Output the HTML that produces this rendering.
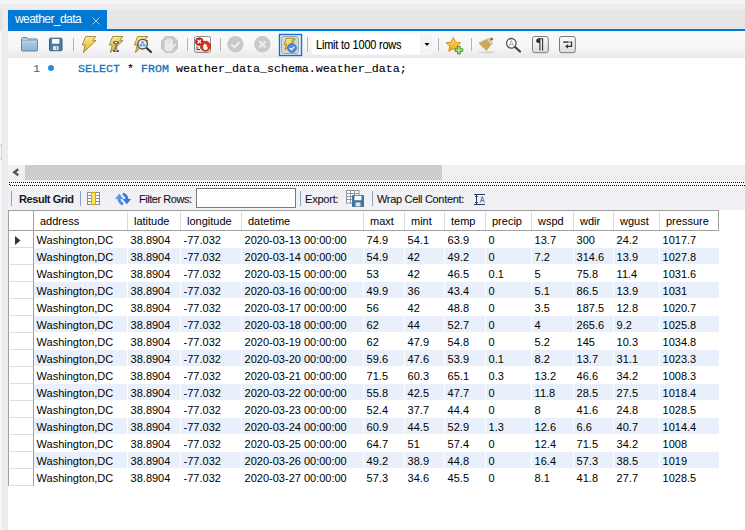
<!DOCTYPE html>
<html><head><meta charset="utf-8">
<style>
*{margin:0;padding:0;box-sizing:border-box}
html,body{width:745px;height:530px;overflow:hidden;background:#fff;font-family:"Liberation Sans",sans-serif;font-size:11px;color:#000}
.a{position:absolute}
#top{left:0;top:0;width:745px;height:4px;background:#f4f4f6}
#top2{left:0;top:4px;width:745px;height:6px;background:#ececef}
#ls1{left:0;top:10px;width:2px;height:21px;background:#e3e3e3}
#ls2{left:2px;top:10px;width:6px;height:520px;background:#ececef}
#ls3{left:0;top:31px;width:2px;height:499px;background:#f6f6f6}
#strip{left:8px;top:10px;width:737px;height:19px;background:#e6e6e6}
#tab{left:8px;top:10px;width:99px;height:21px;background:#0078d4;color:#fff;font-size:12px}
#bline{left:8px;top:29px;width:737px;height:2px;background:#0078d4}
#tb{left:8px;top:31px;width:737px;height:27px;background:linear-gradient(#f9f9f9 0,#f7f7f7 55%,#e9e9e9 100%)}
#ed{left:8px;top:58px;width:737px;height:107px;background:#fff}
#sb{left:8px;top:165px;width:737px;height:16px;background:#f0f0f0}
#thumb{left:25px;top:165px;width:417px;height:15px;background:#cdcdcd}
#dots{left:8px;top:181px;width:737px;height:6px;background:#fff}
#rtb{left:8px;top:186px;width:737px;height:24px;background:#f0f0f5}
.sep{position:absolute;width:1px;background:#a8a8a8}
.sep2{position:absolute;width:1px;background:#8aa2bc}
.mono{font-family:"Liberation Mono",monospace;font-size:11.67px}
.gt{white-space:pre;font-size:11px;line-height:17px}
</style></head><body>
<div class="a" id="top"></div>
<div class="a" id="top2"></div>
<div class="a" id="ls1"></div>
<div class="a" id="ls2"></div>
<div class="a" id="ls3"></div>
<div class="a" style="left:0;top:144px;width:2px;height:16px;border:1px solid #d2d2d2;border-left:none"></div>
<div class="a" id="strip"></div>
<div class="a" id="bline"></div>
<div class="a" id="tab"><span class="a" style="left:7px;top:2px;letter-spacing:-0.55px">weather_data</span>
<svg class="a" style="left:84px;top:7px" width="8" height="8"><path d="M0.5 0.5L7.5 7.5M7.5 0.5L0.5 7.5" stroke="#a9cdf0" stroke-width="1"/></svg></div>
<div class="a" id="tb"></div>
<!--TB-->
<svg class="a" style="left:0;top:31px" width="745" height="27">
<defs>
<linearGradient id="fold" x1="0" y1="0" x2="0" y2="1"><stop offset="0" stop-color="#c2d7ea"/><stop offset="1" stop-color="#8eb0cd"/></linearGradient>
<linearGradient id="bolt" x1="0" y1="0" x2="0.3" y2="1"><stop offset="0" stop-color="#fdf6c8"/><stop offset="0.35" stop-color="#f2dc70"/><stop offset="1" stop-color="#dcb432"/></linearGradient>
<linearGradient id="btn" x1="0" y1="0" x2="0" y2="1"><stop offset="0" stop-color="#fdfdfd"/><stop offset="1" stop-color="#dcdcdc"/></linearGradient>
<linearGradient id="star" x1="0" y1="0" x2="0" y2="1"><stop offset="0" stop-color="#ffe070"/><stop offset="1" stop-color="#f0a010"/></linearGradient>
</defs>
<!-- folder -->
<path d="M21.5 7.5q0-1 1-1h4.5l1.2 1.5h8.3q1 0 1 1v10q0 1-1 1h-14q-1 0-1-1z" fill="url(#fold)" stroke="#5f88aa" stroke-width="1"/>
<path d="M22 9.3h14.5" stroke="#7d9fbd" stroke-width="0.7"/>
<path d="M22.5 10.5h13.5" stroke="#c8dbeb" stroke-width="0.8" stroke-dasharray="1 1"/>
<!-- floppy -->
<rect x="49.5" y="7.2" width="12.5" height="12.5" rx="1" fill="#4f7ea5" stroke="#325b7c"/>
<rect x="51.8" y="7.8" width="8" height="5.2" fill="#fff" stroke="#3a6585" stroke-width="0.5"/>
<rect x="53" y="15.2" width="5.5" height="4" fill="#e4e4e4"/>
<rect x="56" y="16" width="1" height="2.4" fill="#8a8a8a"/>
<!-- separators -->
<rect x="73" y="7" width="1" height="13" fill="#b4b4b4"/>
<rect x="187" y="7" width="1" height="13" fill="#b4b4b4"/>
<rect x="220" y="7" width="1" height="13" fill="#b4b4b4"/>
<rect x="307" y="6" width="1" height="15" fill="#b4b4b4"/>
<rect x="438" y="7" width="1" height="13" fill="#b4b4b4"/>
<rect x="471" y="7" width="1" height="13" fill="#b4b4b4"/>
<!-- bolts -->
<g transform="translate(82,5)"><path d="M3.7 0.5H13.7L10.8 4.6H14L1.4 16.5L3.3 9H0.3Z" fill="url(#bolt)" stroke="#a07a28" stroke-width="0.85" stroke-linejoin="round"/></g>
<g transform="translate(109,5)"><path d="M3.7 0.5H13.7L10.8 4.6H14L1.4 16.5L3.3 9H0.3Z" fill="url(#bolt)" stroke="#a07a28" stroke-width="0.85" stroke-linejoin="round"/>
<path d="M5.2 6.5h3.6M7 6.5v8.5M5.2 15h3.6" stroke="#222" stroke-width="2.2" stroke-linecap="round"/><path d="M5.5 6.5h3M7 6.5v8.5M5.5 15h3" stroke="#fff" stroke-width="0.9"/></g>
<g transform="translate(134,5)"><path d="M3.7 0.5H13.7L10.8 4.6H14L1.4 16.5L3.3 9H0.3Z" fill="url(#bolt)" stroke="#a07a28" stroke-width="0.85" stroke-linejoin="round"/>
<path d="M12 11.5L17 16" stroke="#333" stroke-width="2.2" stroke-linecap="round"/>
<circle cx="8.6" cy="8.2" r="4.8" fill="#e8eef4" stroke="#555" stroke-width="1.4"/>
<circle cx="8.6" cy="6.6" r="1.3" fill="#5a9ad8"/><circle cx="7" cy="9.2" r="1.3" fill="#5a9ad8"/><circle cx="10.2" cy="9.2" r="1.3" fill="#5a9ad8"/></g>
<!-- stop -->
<path d="M165.7 5h7.6l4.7 4.7v7.6l-4.7 4.7h-7.6l-4.7-4.7v-7.6z" fill="#c6c6c6"/>
<g stroke="#ebebeb" stroke-width="1.9" stroke-linecap="round" fill="none">
<path d="M165.6 13.5v-3.6M167.7 13v-4.8M169.8 13v-5M171.9 13.5v-4.4M172.6 16.3l2.6-2.6"/>
</g>
<path d="M164.7 12.8h8.2v4.6q0 2.8-2.8 2.8h-2.6q-2.8 0-2.8-2.8z" fill="#ebebeb"/>
<!-- red box -->
<rect x="194.5" y="5.5" width="16" height="16" rx="2" fill="url(#btn)" stroke="#8c8c8c"/>
<circle cx="199.3" cy="10.6" r="3.8" fill="#e02020" stroke="#a01010" stroke-width="0.8"/>
<path d="M197.6 8.9l3.4 3.4M201 8.9l-3.4 3.4" stroke="#fff" stroke-width="1.3"/>
<path d="M203.5 10.4h4l2.8 2.8v4l-2.8 2.8h-4l-2.8-2.8v-4z" fill="#e83018" stroke="#b02010" stroke-width="0.8"/>
<path d="M203.3 17.5v-3.5l0.8 0v-1.3l0.9 0v1l0.9-1v1l0.9 0v3l0.8-1l0.4 1.3l-1.6 2h-2z" fill="#fff"/>
<path d="M197 15.5v3h3" stroke="#333" stroke-width="0.9" fill="none"/>
<!-- gray check/x circles -->
<circle cx="235.4" cy="13.3" r="8.2" fill="#c9c9c9"/>
<path d="M231.5 13.5l2.8 2.8l5.2-5.2" stroke="#ebebeb" stroke-width="2.3" fill="none"/>
<circle cx="262.4" cy="13.3" r="8.2" fill="#c9c9c9"/>
<path d="M259.3 10.2l6.2 6.2M265.5 10.2l-6.2 6.2" stroke="#ebebeb" stroke-width="2.3"/>
<!-- selected autocommit -->
<rect x="279.5" y="3.5" width="22" height="21" fill="#f4f4f4" stroke="#0a74d4" stroke-width="1.4"/>
<rect x="281.5" y="5.5" width="17" height="17" rx="2" fill="#d6d6d6" stroke="#a2a2a2"/>
<g transform="translate(284,7) scale(0.72)"><path d="M3.7 0.5H13.7L10.8 4.6H14L1.4 16.5L3.3 9H0.3Z" fill="url(#bolt)" stroke="#a8801e" stroke-width="1.2"/></g>
<circle cx="292" cy="17" r="4.5" fill="#4a8ee0" stroke="#2d6fc0" stroke-width="0.7"/>
<path d="M289.8 17l1.6 1.6l3-3" stroke="#fff" stroke-width="1.2" fill="none"/>
<circle cx="294.6" cy="8.6" r="1" fill="#50c040"/>
<!-- limit dropdown -->
<rect x="312" y="4" width="120" height="19.5" fill="#ffffff"/>
<rect x="420" y="4" width="12" height="19.5" fill="#f4f4f4"/>
<path d="M424.5 12h5l-2.5 3z" fill="#000"/>
<!-- star plus -->
<path d="M453.3 6.6l2.2 4.6l5 0.6l-3.7 3.4l1 5l-4.5-2.5l-4.5 2.5l1-5l-3.7-3.4l5-0.6z" fill="url(#star)" stroke="#c88a10" stroke-width="0.9" stroke-linejoin="round"/>
<path d="M457.6 15.2h2.6v2.6h2.6v2.6h-2.6v2.6h-2.6v-2.6h-2.6v-2.6h2.6z" fill="#a8e090" stroke="#3c8a28" stroke-width="0.9"/>
<!-- broom -->
<ellipse cx="486.4" cy="21.3" rx="8" ry="1.1" fill="#d4d4d4"/>
<path d="M478.8 12.1L486.4 8.4L490.8 13.8L486.4 19.6Z" fill="#d8b466" stroke="#b08a40" stroke-width="0.5"/>
<path d="M480.5 13.5L487.5 9.8M482.2 15L488.7 11.3M483.9 16.5L489.8 12.8M485.5 18L490.5 14.2" stroke="#b89040" stroke-width="0.7"/>
<path d="M486.4 8.4L488.6 7.2L492.8 12.6L490.8 13.8Z" fill="#d6d0c4" stroke="#a09888" stroke-width="0.5"/>
<circle cx="491.6" cy="8" r="1.6" fill="#a8701c"/>
<!-- magnifier A -->
<path d="M514.5 15.5l5.5 5" stroke="#444" stroke-width="2.2" stroke-linecap="round"/>
<circle cx="511.3" cy="12.3" r="4.8" fill="#fff" stroke="#555" stroke-width="1.3"/>
<path d="M509.2 15l2.1-5.5l2.1 5.5M510 13.4h2.6" stroke="#999" stroke-width="0.8" fill="none"/>
<!-- pilcrow box -->
<rect x="532.5" y="5.5" width="15.8" height="16.2" rx="2.2" fill="url(#btn)" stroke="#7a7a7a"/>
<path d="M540 7.5h-1.6a2.3 2.3 0 0 0 0 4.6h1.6z" fill="#303030"/>
<path d="M539.9 7.5v12M542.6 7.5v12M538 7.8h5.2" stroke="#303030" stroke-width="1.1" fill="none"/>
<!-- wrap box -->
<rect x="559.5" y="5.5" width="15.8" height="16.2" rx="2.2" fill="url(#btn)" stroke="#7a7a7a"/>
<path d="M563.2 11.1h5.5" stroke="#303030" stroke-width="1.4"/>
<path d="M569.6 11h1.9v4.3h-4.5" stroke="#303030" stroke-width="1.2" fill="none"/>
<path d="M568 13.2l-3 2.1l3 2.1z" fill="#303030"/>
</svg>
<div class="a" style="left:316px;top:38.2px;font-size:12px;letter-spacing:-0.2px;white-space:pre;transform:scaleX(0.91);transform-origin:0 0;-webkit-text-stroke:0.1px #000">Limit to 1000 rows</div>
<!--/TB-->

<div class="a" id="ed"></div>
<div class="a mono" style="left:33px;top:62px;color:#2f7a90;-webkit-text-stroke:0.2px">1</div>
<div class="a" style="left:48px;top:65px;width:6px;height:6px;border-radius:50%;background:#1e90e8"></div>
<div class="a mono" style="left:78px;top:62px;white-space:pre;-webkit-text-stroke:0.12px"><span style="color:#1272bd;-webkit-text-stroke:0.3px">SELECT</span> * <span style="color:#1272bd;-webkit-text-stroke:0.3px">FROM</span> weather_data_schema.weather_data;</div>
<div class="a" id="sb"></div>
<div class="a" id="thumb"></div>
<div class="a" id="dots"></div>
<div class="a" id="rtb"></div>
<!--RTB-->
<svg class="a" style="left:0;top:160px" width="745" height="50">
<!-- scroll arrow -->
<path d="M18.3 9.3L14.2 12.3L18.3 15.3" stroke="#555" stroke-width="2.3" fill="none"/>
<!-- dots -->
<pattern id="dp" x="0" y="0" width="2" height="10" patternUnits="userSpaceOnUse"><rect x="1" y="22" width="1" height="1" fill="#000"/></pattern>
<!-- separators -->
<rect x="11" y="31" width="1" height="15" fill="#8da3bd"/>
<rect x="80" y="31" width="1" height="15" fill="#8da3bd"/>
<rect x="300" y="31" width="1" height="15" fill="#8da3bd"/>
<rect x="372" y="31" width="1" height="15" fill="#8da3bd"/>
<!-- grid icon -->
<g transform="translate(87,32)">
<rect x="0.5" y="0.5" width="12" height="12" fill="#fff" stroke="#8c8c8c"/>
<path d="M0.5 3.5h12M0.5 6.5h12M0.5 9.5h12" stroke="#8c8c8c"/>
<rect x="4.5" y="0.5" width="4" height="12" fill="#ffe45a" stroke="#e0a000"/>
</g>
<!-- refresh icon -->
<path d="M115 39L119.3 33.6L123.6 39Z" fill="#5a9cee"/>
<path d="M117.6 38.5Q117.6 43.2 122.6 45.6L123.6 43Q120.6 41.6 120.6 38.5Z" fill="#4a8ae6"/>
<path d="M122.4 39H131.2L126.8 44.2Z" fill="#3a78dc"/>
<path d="M128.4 39.5Q128.4 34.8 123.4 32.6L122.4 35Q125.4 36.4 125.4 39.5Z" fill="#3a78dc"/>
<!-- filter input -->
<rect x="196.5" y="28.5" width="99" height="19" fill="#fff" stroke="#7a7a7a"/>
<!-- export icon -->
<g transform="translate(346,30)">
<rect x="0.5" y="0.5" width="12.5" height="12.5" fill="#fff" stroke="#8d939b"/>
<path d="M0.5 3.5h12.5M0.5 6.5h12.5M0.5 9.5h12.5M4.5 0.5v12.5M8.5 0.5v12.5" stroke="#8d939b"/>
<rect x="6" y="5" width="12" height="12" rx="1" fill="#44739a"/>
<rect x="8.5" y="5.8" width="7" height="4.4" fill="#fff"/>
<rect x="9.5" y="12.4" width="5" height="4" fill="#dfe4e8"/>
</g>
<!-- wrap icon -->
<g transform="translate(474,34)">
<path d="M0 0.5h11M0 10.5h11M2.5 1v9" stroke="#283c64" stroke-width="1"/>
<path d="M0.8 3l1.7-2l1.7 2zM0.8 8l1.7 2l1.7-2z" fill="#283c64"/>
<path d="M6.3 8.5l2-6l2 6M7 6.6h2.7" stroke="#4a6890" stroke-width="0.9" fill="none"/>
</g>
</svg>
<svg class="a" style="left:8px;top:181px" width="737" height="6">
<rect width="737" height="6" fill="#fafafa"/><rect width="737" height="1" fill="#f0f0f0"/><rect y="5" width="737" height="1" fill="#f0f0f4"/>
<path d="M0 0.5H737" stroke="#fff" stroke-width="1" stroke-dasharray="1 1"/>
<path d="M1 5.5H737" stroke="#fff" stroke-width="1" stroke-dasharray="1 1"/>
<path d="M1 1.5H737" stroke="#000" stroke-width="1" stroke-dasharray="1 1"/>
<path d="M0 2.5H737" stroke="#fff" stroke-width="1" stroke-dasharray="1 1"/>
<path d="M2 4.5H737" stroke="#000" stroke-width="1" stroke-dasharray="1 1"/>
<rect x="1" y="3" width="1" height="1" fill="#000"/>
</svg>
<div class="a" style="left:19px;top:193px;font-weight:bold;font-size:11px;letter-spacing:-0.42px;white-space:pre;color:#1a1a1a">Result Grid</div>
<div class="a" style="left:139px;top:193px;font-size:11px;letter-spacing:-0.45px;white-space:pre;color:#1a1a1a;-webkit-text-stroke:0.1px #000">Filter Rows:</div>
<div class="a" style="left:305px;top:193px;font-size:11px;letter-spacing:-0.2px;white-space:pre;color:#1a1a1a;-webkit-text-stroke:0.1px #000">Export:</div>
<div class="a" style="left:377px;top:193px;font-size:11px;letter-spacing:-0.32px;white-space:pre;color:#1a1a1a;-webkit-text-stroke:0.1px #000">Wrap Cell Content:</div>
<!--/RTB-->

<!--GRID-->
<div class="a" style="left:34px;top:248px;width:685px;height:16px;background:#e9f0fb"></div>
<div class="a" style="left:34px;top:282px;width:685px;height:16px;background:#e9f0fb"></div>
<div class="a" style="left:34px;top:316px;width:685px;height:16px;background:#e9f0fb"></div>
<div class="a" style="left:34px;top:350px;width:685px;height:16px;background:#e9f0fb"></div>
<div class="a" style="left:34px;top:384px;width:685px;height:16px;background:#e9f0fb"></div>
<div class="a" style="left:34px;top:418px;width:685px;height:16px;background:#e9f0fb"></div>
<div class="a" style="left:34px;top:452px;width:685px;height:16px;background:#e9f0fb"></div>
<div class="a" style="left:127px;top:231px;width:1px;height:255px;background:#fff"></div>
<div class="a" style="left:180px;top:231px;width:1px;height:255px;background:#fff"></div>
<div class="a" style="left:241px;top:231px;width:1px;height:255px;background:#fff"></div>
<div class="a" style="left:363px;top:231px;width:1px;height:255px;background:#fff"></div>
<div class="a" style="left:404px;top:231px;width:1px;height:255px;background:#fff"></div>
<div class="a" style="left:444px;top:231px;width:1px;height:255px;background:#fff"></div>
<div class="a" style="left:485px;top:231px;width:1px;height:255px;background:#fff"></div>
<div class="a" style="left:531px;top:231px;width:1px;height:255px;background:#fff"></div>
<div class="a" style="left:573px;top:231px;width:1px;height:255px;background:#fff"></div>
<div class="a" style="left:613px;top:231px;width:1px;height:255px;background:#fff"></div>
<div class="a" style="left:659px;top:231px;width:1px;height:255px;background:#fff"></div>
<div class="a" style="left:8px;top:210px;width:711px;height:1px;background:#a0a0a0"></div>
<div class="a" style="left:8px;top:230px;width:711px;height:1px;background:#a0a0a0"></div>
<div class="a" style="left:8px;top:210px;width:1px;height:276px;background:#a0a0a0"></div>
<div class="a" style="left:33px;top:210px;width:1px;height:276px;background:#a0a0a0"></div>
<div class="a" style="left:718px;top:210px;width:1px;height:21px;background:#a0a0a0"></div>
<div class="a" style="left:127px;top:212px;width:1px;height:18px;background:#dadada"></div>
<div class="a" style="left:180px;top:212px;width:1px;height:18px;background:#dadada"></div>
<div class="a" style="left:241px;top:212px;width:1px;height:18px;background:#dadada"></div>
<div class="a" style="left:363px;top:212px;width:1px;height:18px;background:#dadada"></div>
<div class="a" style="left:404px;top:212px;width:1px;height:18px;background:#dadada"></div>
<div class="a" style="left:444px;top:212px;width:1px;height:18px;background:#dadada"></div>
<div class="a" style="left:485px;top:212px;width:1px;height:18px;background:#dadada"></div>
<div class="a" style="left:531px;top:212px;width:1px;height:18px;background:#dadada"></div>
<div class="a" style="left:573px;top:212px;width:1px;height:18px;background:#dadada"></div>
<div class="a" style="left:613px;top:212px;width:1px;height:18px;background:#dadada"></div>
<div class="a" style="left:659px;top:212px;width:1px;height:18px;background:#dadada"></div>
<div class="a gt" style="left:40px;top:213px">address</div>
<div class="a gt" style="left:134px;top:213px">latitude</div>
<div class="a gt" style="left:187px;top:213px">longitude</div>
<div class="a gt" style="left:248px;top:213px">datetime</div>
<div class="a gt" style="left:370px;top:213px">maxt</div>
<div class="a gt" style="left:411px;top:213px">mint</div>
<div class="a gt" style="left:451px;top:213px">temp</div>
<div class="a gt" style="left:492px;top:213px">precip</div>
<div class="a gt" style="left:538px;top:213px">wspd</div>
<div class="a gt" style="left:580px;top:213px">wdir</div>
<div class="a gt" style="left:620px;top:213px">wgust</div>
<div class="a gt" style="left:666px;top:213px">pressure</div>
<div class="a" style="left:10px;top:247px;width:23px;height:1px;background:#dcdcdc"></div>
<div class="a gt" style="left:36.6px;top:232px">Washington,DC</div>
<div class="a gt" style="left:130.6px;top:232px">38.8904</div>
<div class="a gt" style="left:183.6px;top:232px">-77.032</div>
<div class="a gt" style="left:244.6px;top:232px">2020-03-13 00:00:00</div>
<div class="a gt" style="left:366.6px;top:232px">74.9</div>
<div class="a gt" style="left:407.6px;top:232px">54.1</div>
<div class="a gt" style="left:447.6px;top:232px">63.9</div>
<div class="a gt" style="left:488.6px;top:232px">0</div>
<div class="a gt" style="left:534.6px;top:232px">13.7</div>
<div class="a gt" style="left:576.6px;top:232px">300</div>
<div class="a gt" style="left:616.6px;top:232px">24.2</div>
<div class="a gt" style="left:662.6px;top:232px">1017.7</div>
<div class="a" style="left:10px;top:264px;width:23px;height:1px;background:#dcdcdc"></div>
<div class="a gt" style="left:36.6px;top:249px">Washington,DC</div>
<div class="a gt" style="left:130.6px;top:249px">38.8904</div>
<div class="a gt" style="left:183.6px;top:249px">-77.032</div>
<div class="a gt" style="left:244.6px;top:249px">2020-03-14 00:00:00</div>
<div class="a gt" style="left:366.6px;top:249px">54.9</div>
<div class="a gt" style="left:407.6px;top:249px">42</div>
<div class="a gt" style="left:447.6px;top:249px">49.2</div>
<div class="a gt" style="left:488.6px;top:249px">0</div>
<div class="a gt" style="left:534.6px;top:249px">7.2</div>
<div class="a gt" style="left:576.6px;top:249px">314.6</div>
<div class="a gt" style="left:616.6px;top:249px">13.9</div>
<div class="a gt" style="left:662.6px;top:249px">1027.8</div>
<div class="a" style="left:10px;top:281px;width:23px;height:1px;background:#dcdcdc"></div>
<div class="a gt" style="left:36.6px;top:266px">Washington,DC</div>
<div class="a gt" style="left:130.6px;top:266px">38.8904</div>
<div class="a gt" style="left:183.6px;top:266px">-77.032</div>
<div class="a gt" style="left:244.6px;top:266px">2020-03-15 00:00:00</div>
<div class="a gt" style="left:366.6px;top:266px">53</div>
<div class="a gt" style="left:407.6px;top:266px">42</div>
<div class="a gt" style="left:447.6px;top:266px">46.5</div>
<div class="a gt" style="left:488.6px;top:266px">0.1</div>
<div class="a gt" style="left:534.6px;top:266px">5</div>
<div class="a gt" style="left:576.6px;top:266px">75.8</div>
<div class="a gt" style="left:616.6px;top:266px">11.4</div>
<div class="a gt" style="left:662.6px;top:266px">1031.6</div>
<div class="a" style="left:10px;top:298px;width:23px;height:1px;background:#dcdcdc"></div>
<div class="a gt" style="left:36.6px;top:283px">Washington,DC</div>
<div class="a gt" style="left:130.6px;top:283px">38.8904</div>
<div class="a gt" style="left:183.6px;top:283px">-77.032</div>
<div class="a gt" style="left:244.6px;top:283px">2020-03-16 00:00:00</div>
<div class="a gt" style="left:366.6px;top:283px">49.9</div>
<div class="a gt" style="left:407.6px;top:283px">36</div>
<div class="a gt" style="left:447.6px;top:283px">43.4</div>
<div class="a gt" style="left:488.6px;top:283px">0</div>
<div class="a gt" style="left:534.6px;top:283px">5.1</div>
<div class="a gt" style="left:576.6px;top:283px">86.5</div>
<div class="a gt" style="left:616.6px;top:283px">13.9</div>
<div class="a gt" style="left:662.6px;top:283px">1031</div>
<div class="a" style="left:10px;top:315px;width:23px;height:1px;background:#dcdcdc"></div>
<div class="a gt" style="left:36.6px;top:300px">Washington,DC</div>
<div class="a gt" style="left:130.6px;top:300px">38.8904</div>
<div class="a gt" style="left:183.6px;top:300px">-77.032</div>
<div class="a gt" style="left:244.6px;top:300px">2020-03-17 00:00:00</div>
<div class="a gt" style="left:366.6px;top:300px">56</div>
<div class="a gt" style="left:407.6px;top:300px">42</div>
<div class="a gt" style="left:447.6px;top:300px">48.8</div>
<div class="a gt" style="left:488.6px;top:300px">0</div>
<div class="a gt" style="left:534.6px;top:300px">3.5</div>
<div class="a gt" style="left:576.6px;top:300px">187.5</div>
<div class="a gt" style="left:616.6px;top:300px">12.8</div>
<div class="a gt" style="left:662.6px;top:300px">1020.7</div>
<div class="a" style="left:10px;top:332px;width:23px;height:1px;background:#dcdcdc"></div>
<div class="a gt" style="left:36.6px;top:317px">Washington,DC</div>
<div class="a gt" style="left:130.6px;top:317px">38.8904</div>
<div class="a gt" style="left:183.6px;top:317px">-77.032</div>
<div class="a gt" style="left:244.6px;top:317px">2020-03-18 00:00:00</div>
<div class="a gt" style="left:366.6px;top:317px">62</div>
<div class="a gt" style="left:407.6px;top:317px">44</div>
<div class="a gt" style="left:447.6px;top:317px">52.7</div>
<div class="a gt" style="left:488.6px;top:317px">0</div>
<div class="a gt" style="left:534.6px;top:317px">4</div>
<div class="a gt" style="left:576.6px;top:317px">265.6</div>
<div class="a gt" style="left:616.6px;top:317px">9.2</div>
<div class="a gt" style="left:662.6px;top:317px">1025.8</div>
<div class="a" style="left:10px;top:349px;width:23px;height:1px;background:#dcdcdc"></div>
<div class="a gt" style="left:36.6px;top:334px">Washington,DC</div>
<div class="a gt" style="left:130.6px;top:334px">38.8904</div>
<div class="a gt" style="left:183.6px;top:334px">-77.032</div>
<div class="a gt" style="left:244.6px;top:334px">2020-03-19 00:00:00</div>
<div class="a gt" style="left:366.6px;top:334px">62</div>
<div class="a gt" style="left:407.6px;top:334px">47.9</div>
<div class="a gt" style="left:447.6px;top:334px">54.8</div>
<div class="a gt" style="left:488.6px;top:334px">0</div>
<div class="a gt" style="left:534.6px;top:334px">5.2</div>
<div class="a gt" style="left:576.6px;top:334px">145</div>
<div class="a gt" style="left:616.6px;top:334px">10.3</div>
<div class="a gt" style="left:662.6px;top:334px">1034.8</div>
<div class="a" style="left:10px;top:366px;width:23px;height:1px;background:#dcdcdc"></div>
<div class="a gt" style="left:36.6px;top:351px">Washington,DC</div>
<div class="a gt" style="left:130.6px;top:351px">38.8904</div>
<div class="a gt" style="left:183.6px;top:351px">-77.032</div>
<div class="a gt" style="left:244.6px;top:351px">2020-03-20 00:00:00</div>
<div class="a gt" style="left:366.6px;top:351px">59.6</div>
<div class="a gt" style="left:407.6px;top:351px">47.6</div>
<div class="a gt" style="left:447.6px;top:351px">53.9</div>
<div class="a gt" style="left:488.6px;top:351px">0.1</div>
<div class="a gt" style="left:534.6px;top:351px">8.2</div>
<div class="a gt" style="left:576.6px;top:351px">13.7</div>
<div class="a gt" style="left:616.6px;top:351px">31.1</div>
<div class="a gt" style="left:662.6px;top:351px">1023.3</div>
<div class="a" style="left:10px;top:383px;width:23px;height:1px;background:#dcdcdc"></div>
<div class="a gt" style="left:36.6px;top:368px">Washington,DC</div>
<div class="a gt" style="left:130.6px;top:368px">38.8904</div>
<div class="a gt" style="left:183.6px;top:368px">-77.032</div>
<div class="a gt" style="left:244.6px;top:368px">2020-03-21 00:00:00</div>
<div class="a gt" style="left:366.6px;top:368px">71.5</div>
<div class="a gt" style="left:407.6px;top:368px">60.3</div>
<div class="a gt" style="left:447.6px;top:368px">65.1</div>
<div class="a gt" style="left:488.6px;top:368px">0.3</div>
<div class="a gt" style="left:534.6px;top:368px">13.2</div>
<div class="a gt" style="left:576.6px;top:368px">46.6</div>
<div class="a gt" style="left:616.6px;top:368px">34.2</div>
<div class="a gt" style="left:662.6px;top:368px">1008.3</div>
<div class="a" style="left:10px;top:400px;width:23px;height:1px;background:#dcdcdc"></div>
<div class="a gt" style="left:36.6px;top:385px">Washington,DC</div>
<div class="a gt" style="left:130.6px;top:385px">38.8904</div>
<div class="a gt" style="left:183.6px;top:385px">-77.032</div>
<div class="a gt" style="left:244.6px;top:385px">2020-03-22 00:00:00</div>
<div class="a gt" style="left:366.6px;top:385px">55.8</div>
<div class="a gt" style="left:407.6px;top:385px">42.5</div>
<div class="a gt" style="left:447.6px;top:385px">47.7</div>
<div class="a gt" style="left:488.6px;top:385px">0</div>
<div class="a gt" style="left:534.6px;top:385px">11.8</div>
<div class="a gt" style="left:576.6px;top:385px">28.5</div>
<div class="a gt" style="left:616.6px;top:385px">27.5</div>
<div class="a gt" style="left:662.6px;top:385px">1018.4</div>
<div class="a" style="left:10px;top:417px;width:23px;height:1px;background:#dcdcdc"></div>
<div class="a gt" style="left:36.6px;top:402px">Washington,DC</div>
<div class="a gt" style="left:130.6px;top:402px">38.8904</div>
<div class="a gt" style="left:183.6px;top:402px">-77.032</div>
<div class="a gt" style="left:244.6px;top:402px">2020-03-23 00:00:00</div>
<div class="a gt" style="left:366.6px;top:402px">52.4</div>
<div class="a gt" style="left:407.6px;top:402px">37.7</div>
<div class="a gt" style="left:447.6px;top:402px">44.4</div>
<div class="a gt" style="left:488.6px;top:402px">0</div>
<div class="a gt" style="left:534.6px;top:402px">8</div>
<div class="a gt" style="left:576.6px;top:402px">41.6</div>
<div class="a gt" style="left:616.6px;top:402px">24.8</div>
<div class="a gt" style="left:662.6px;top:402px">1028.5</div>
<div class="a" style="left:10px;top:434px;width:23px;height:1px;background:#dcdcdc"></div>
<div class="a gt" style="left:36.6px;top:419px">Washington,DC</div>
<div class="a gt" style="left:130.6px;top:419px">38.8904</div>
<div class="a gt" style="left:183.6px;top:419px">-77.032</div>
<div class="a gt" style="left:244.6px;top:419px">2020-03-24 00:00:00</div>
<div class="a gt" style="left:366.6px;top:419px">60.9</div>
<div class="a gt" style="left:407.6px;top:419px">44.5</div>
<div class="a gt" style="left:447.6px;top:419px">52.9</div>
<div class="a gt" style="left:488.6px;top:419px">1.3</div>
<div class="a gt" style="left:534.6px;top:419px">12.6</div>
<div class="a gt" style="left:576.6px;top:419px">6.6</div>
<div class="a gt" style="left:616.6px;top:419px">40.7</div>
<div class="a gt" style="left:662.6px;top:419px">1014.4</div>
<div class="a" style="left:10px;top:451px;width:23px;height:1px;background:#dcdcdc"></div>
<div class="a gt" style="left:36.6px;top:436px">Washington,DC</div>
<div class="a gt" style="left:130.6px;top:436px">38.8904</div>
<div class="a gt" style="left:183.6px;top:436px">-77.032</div>
<div class="a gt" style="left:244.6px;top:436px">2020-03-25 00:00:00</div>
<div class="a gt" style="left:366.6px;top:436px">64.7</div>
<div class="a gt" style="left:407.6px;top:436px">51</div>
<div class="a gt" style="left:447.6px;top:436px">57.4</div>
<div class="a gt" style="left:488.6px;top:436px">0</div>
<div class="a gt" style="left:534.6px;top:436px">12.4</div>
<div class="a gt" style="left:576.6px;top:436px">71.5</div>
<div class="a gt" style="left:616.6px;top:436px">34.2</div>
<div class="a gt" style="left:662.6px;top:436px">1008</div>
<div class="a" style="left:10px;top:468px;width:23px;height:1px;background:#dcdcdc"></div>
<div class="a gt" style="left:36.6px;top:453px">Washington,DC</div>
<div class="a gt" style="left:130.6px;top:453px">38.8904</div>
<div class="a gt" style="left:183.6px;top:453px">-77.032</div>
<div class="a gt" style="left:244.6px;top:453px">2020-03-26 00:00:00</div>
<div class="a gt" style="left:366.6px;top:453px">49.2</div>
<div class="a gt" style="left:407.6px;top:453px">38.9</div>
<div class="a gt" style="left:447.6px;top:453px">44.8</div>
<div class="a gt" style="left:488.6px;top:453px">0</div>
<div class="a gt" style="left:534.6px;top:453px">16.4</div>
<div class="a gt" style="left:576.6px;top:453px">57.3</div>
<div class="a gt" style="left:616.6px;top:453px">38.5</div>
<div class="a gt" style="left:662.6px;top:453px">1019</div>
<div class="a" style="left:10px;top:485px;width:23px;height:1px;background:#dcdcdc"></div>
<div class="a gt" style="left:36.6px;top:470px">Washington,DC</div>
<div class="a gt" style="left:130.6px;top:470px">38.8904</div>
<div class="a gt" style="left:183.6px;top:470px">-77.032</div>
<div class="a gt" style="left:244.6px;top:470px">2020-03-27 00:00:00</div>
<div class="a gt" style="left:366.6px;top:470px">57.3</div>
<div class="a gt" style="left:407.6px;top:470px">34.6</div>
<div class="a gt" style="left:447.6px;top:470px">45.5</div>
<div class="a gt" style="left:488.6px;top:470px">0</div>
<div class="a gt" style="left:534.6px;top:470px">8.1</div>
<div class="a gt" style="left:576.6px;top:470px">41.8</div>
<div class="a gt" style="left:616.6px;top:470px">27.7</div>
<div class="a gt" style="left:662.6px;top:470px">1028.5</div>
<svg class="a" style="left:15px;top:236px" width="6" height="10"><path d="M0 0L5.5 4.5L0 9Z" fill="#333"/></svg>
<!--/GRID-->
</body></html>
